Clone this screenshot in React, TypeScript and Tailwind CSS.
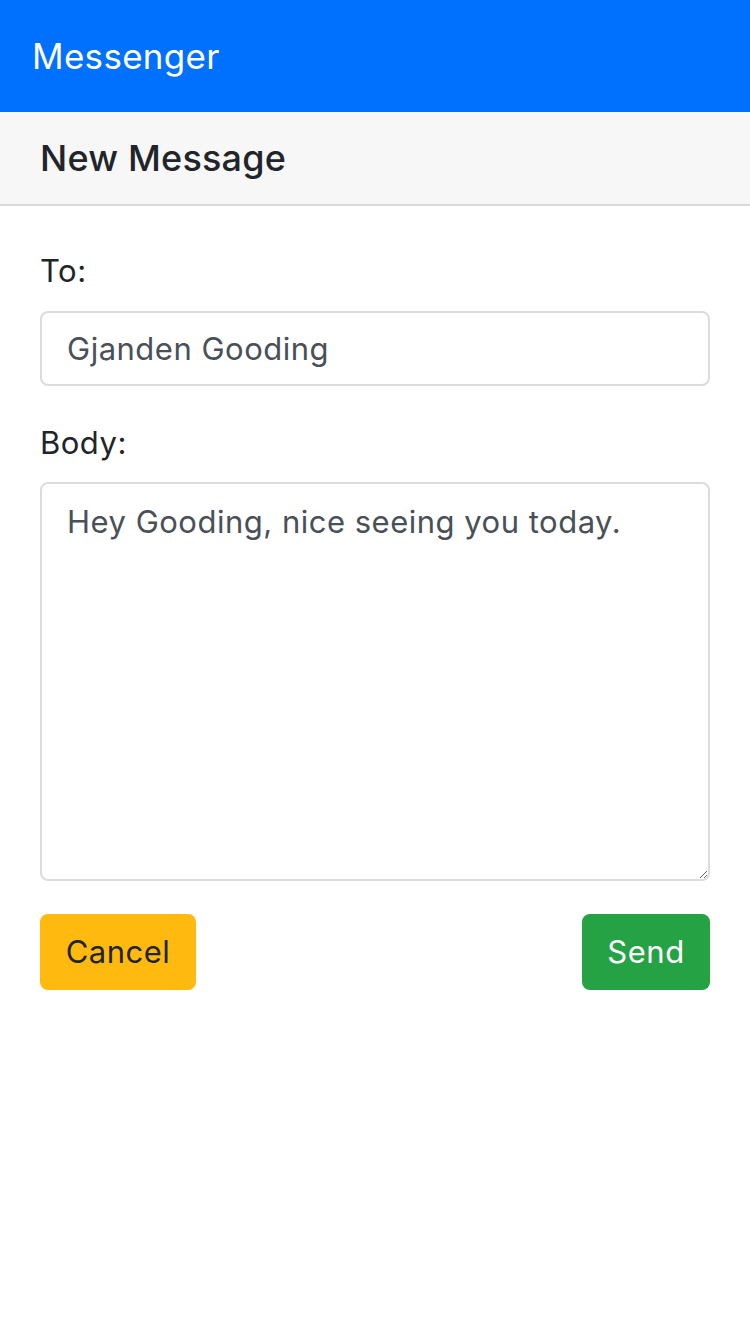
import React from 'react';

const font = { fontFamily: 'Inter, "Noto Sans", sans-serif' };

export default function App() {
    return (
        <div className="min-h-[1334px] w-[750px] bg-white text-[#212529]" style={font}>
            <nav className="h-[112px] bg-[#0070ff] px-[32px] flex items-center">
                <span className="text-white text-[35px] tracking-[0.3px] leading-none">Messenger</span>
            </nav>

            <div className="h-[94px] bg-[#f7f7f7] border-b-2 border-[#d9d9d9] px-[40px] flex items-center">
                <h5 className="text-[36px] font-medium tracking-[0.2px] leading-none">New Message</h5>
            </div>

            <form className="px-[40px] pt-[45px] tracking-[0.5px]">
                <label className="block text-[31px] leading-[40px] mb-[20px]">To:</label>
                <input
                    className="block w-full h-[75px] border-2 border-[#dcdcdc] rounded-[8px] px-[25px] text-[31px] tracking-[0.5px] text-[#495057] outline-none"
                    defaultValue="Gjanden Gooding"
                />

                <label className="block text-[31px] leading-[40px] mt-[37px] mb-[19px]">Body:</label>
                <textarea
                    className="block w-full h-[399px] border-2 border-[#dcdcdc] rounded-[8px] px-[25px] py-[18px] text-[31px] tracking-[0.5px] leading-[40px] text-[#495057] outline-none"
                    defaultValue="Hey Gooding, nice seeing you today."
                />

                <div className="flex justify-between mt-[33px]">
                    <button type="button" className="h-[76px] w-[156px] bg-[#ffb90f] rounded-[8px] text-[31px] text-[#212529]">Cancel</button>
                    <button type="button" className="h-[76px] w-[128px] bg-[#25a244] rounded-[8px] text-[31px] text-white">Send</button>
                </div>
            </form>
        </div>
    );
}
